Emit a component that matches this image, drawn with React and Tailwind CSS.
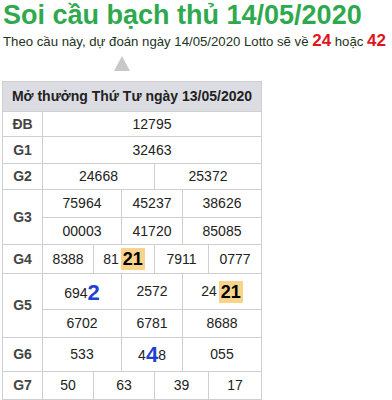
const font = { fontFamily: '"Liberation Sans", Arial, sans-serif' };

function Cell({ className = "", children }) {
  return (
    <div className={`bg-white flex items-center justify-center text-[14px] text-[#222] ${className}`}>
      {children}
    </div>
  );
}

function Label({ className = "", children }) {
  return (
    <div className={`bg-white flex items-center justify-center text-[14px] font-bold text-[#444] ${className}`}>
      {children}
    </div>
  );
}

function Hot({ children }) {
  return <span className="bg-[#f8d48a] font-bold text-[18px] text-black px-[2px] leading-[22px] ml-[2px]">{children}</span>;
}

function Blue({ children }) {
  return <span className="font-bold text-[22px] text-[#1f3fd6] leading-none">{children}</span>;
}

export default function App() {
  return (
    <div className="bg-white w-[392px] h-[400px] overflow-hidden px-[2px]" style={font}>
      <h1 className="text-[27px] font-bold text-[#2fa94e] leading-[30px] pl-px whitespace-nowrap">
        Soi cầu bạch thủ 14/05/2020
      </h1>
      <p className="text-[13.2px] text-[#223322] leading-[21px] pl-px whitespace-nowrap">
        Theo cầu này, dự đoán ngày 14/05/2020 Lotto sẽ về{" "}
        <b className="text-[#e0141e] text-[17px]">24</b> hoặc{" "}
        <b className="text-[#e0141e] text-[17px]">42</b>
      </p>
      <div className="flex justify-start pl-[112px] mt-[4px] h-[25px]">
        <div className="w-0 h-0 border-l-[8px] border-r-[8px] border-b-[15px] border-l-transparent border-r-transparent border-b-[#c8c8c8]" />
      </div>
      <div className="grid w-[260px] bg-[#cfcfcf] gap-px border border-[#cfcfcf] border-b-2 grid-cols-[39px_50px_27px_32px_27px_25px_52px] grid-rows-[29px_24px_26px_25px_27px_26px_28px_35px_27px_33px_27px]">
        <div className="col-span-7 bg-[#dcdde3] flex items-center justify-center text-[14px] font-bold text-[#222]">
          Mở thưởng Thứ Tư ngày 13/05/2020
        </div>

        <Label>ĐB</Label>
        <Cell className="col-span-6">12795</Cell>

        <Label>G1</Label>
        <Cell className="col-span-6">32463</Cell>

        <Label>G2</Label>
        <Cell className="col-span-3">24668</Cell>
        <Cell className="col-span-3">25372</Cell>

        <Label className="row-span-2">G3</Label>
        <Cell className="col-span-2">75964</Cell>
        <Cell className="col-span-2">45237</Cell>
        <Cell className="col-span-2">38626</Cell>
        <Cell className="col-span-2">00003</Cell>
        <Cell className="col-span-2">41720</Cell>
        <Cell className="col-span-2">85085</Cell>

        <Label>G4</Label>
        <Cell>8388</Cell>
        <Cell className="col-span-2">
          81<Hot>21</Hot>
        </Cell>
        <Cell className="col-span-2">7911</Cell>
        <Cell>0777</Cell>

        <Label className="row-span-2">G5</Label>
        <Cell className="col-span-2 items-end pb-[5px]">
          694<Blue>2</Blue>
        </Cell>
        <Cell className="col-span-2">2572</Cell>
        <Cell className="col-span-2">
          24<Hot>21</Hot>
        </Cell>
        <Cell className="col-span-2">6702</Cell>
        <Cell className="col-span-2">6781</Cell>
        <Cell className="col-span-2">8688</Cell>

        <Label>G6</Label>
        <Cell className="col-span-2">533</Cell>
        <Cell className="col-span-2 items-end pb-[5px]">
          4<Blue>4</Blue>8
        </Cell>
        <Cell className="col-span-2">055</Cell>

        <Label>G7</Label>
        <Cell>50</Cell>
        <Cell className="col-span-2">63</Cell>
        <Cell className="col-span-2">39</Cell>
        <Cell>17</Cell>
      </div>
    </div>
  );
}
